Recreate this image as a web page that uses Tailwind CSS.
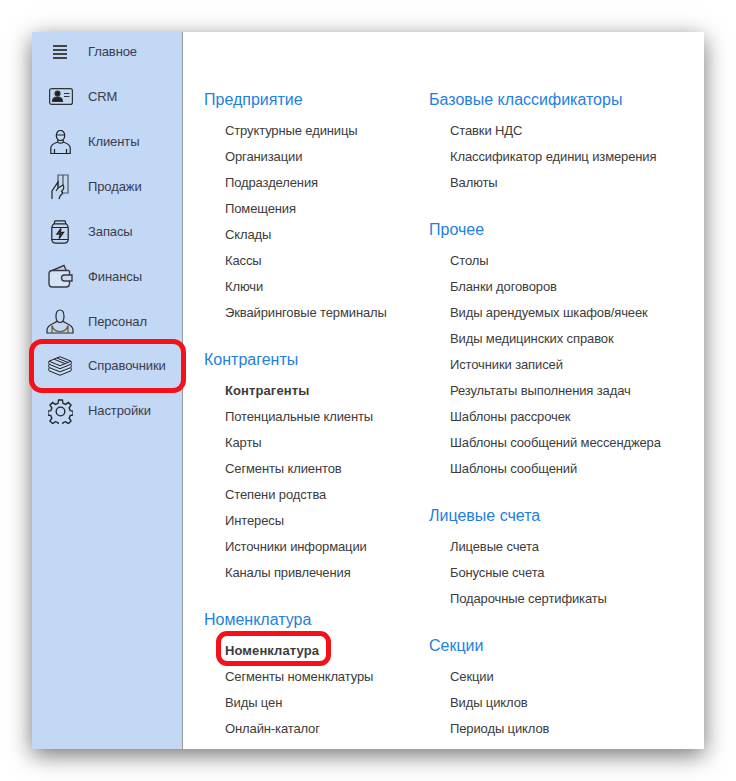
<!DOCTYPE html>
<html lang="en">
<head>
    <meta charset="UTF-8">
    <title>Справочники</title>
    <script src="https://cdn.jsdelivr.net/npm/@tailwindcss/browser@4"></script>
</head>
<body class="bg-white overflow-hidden h-screen font-['Liberation_Sans',sans-serif]">
    <div class="relative mt-[32px] ml-[32px] w-[672px] h-[717px] bg-white flex shadow-[0_6px_22px_rgba(0,0,0,0.55)]">
        <!-- sidebar -->
        <nav class="w-[151px] shrink-0 bg-[#c2d8f5] border-r border-[#9a9a9a] text-[13px] text-[#3b3b4f] tracking-[-0.1px]">
            <a class="flex items-center h-[44.875px] mt-[-2.4px]"><span class="w-[56px] flex justify-center"><svg width="16" height="14" viewBox="0 0 16 14" fill="#444"><rect x="1" y="0" width="14" height="2"/><rect x="1" y="4" width="14" height="2"/><rect x="1" y="8" width="14" height="2"/><rect x="1" y="12" width="14" height="2"/></svg></span>Главное</a>
            <a class="flex items-center h-[44.875px]"><span class="w-[56px] flex justify-center"><svg class="ml-[1px]" width="24" height="17" viewBox="0 0 24 17" fill="none" stroke="#333" stroke-width="1.2"><rect x=".6" y=".6" width="22.800" height="15.800" rx="2"/><circle cx="8.500" cy="5.500" r="2.500" fill="#222"/><path d="M3.500 13.500c0-3 2-4.500 5-4.500s5 1.500 5 4.500z" fill="#222"/><path d="M15 5.500h5.500M15 8.500h5.500"/></svg></span>CRM</a>
            <a class="flex items-center h-[44.875px]"><span class="w-[56px] flex justify-center"><svg width="21" height="24" viewBox="0 0 21 24" fill="none" stroke="#222" stroke-width="1.2"><ellipse cx="10.500" cy="5.500" rx="4.200" ry="5"/><path d="M6.300 5h8.400M7.800 10v2c0 1.500 5.400 1.500 5.400 0v-2M7.800 12c-3 1-7 2-7 6v5.500h19.400V18c0-4-4-5-7-6M4.500 23.500V19M16.500 23.500V19"/></svg></span>Клиенты</a>
            <a class="flex items-center h-[44.875px]"><span class="w-[56px] flex justify-center"><svg width="20" height="26" viewBox="0 0 20 26" fill="none" stroke="#222" stroke-width="1.2"><path d="M8 12V1h10v18h-4M13 1v10" stroke="#555"/><path d="M2 25v-8l6-9v6l5-3c1.500 2 1 4-1.500 6.500l1.500 1.500-2 2-1 1-1 3"/><path d="M8 14l-2 3"/></svg></span>Продажи</a>
            <a class="flex items-center h-[44.875px]"><span class="w-[56px] flex justify-center"><svg width="18" height="24" viewBox="0 0 18 24" fill="none" stroke="#222" stroke-width="1.2"><path d="M4 .8h10l1 3H3zM3 3.800C1 5 .8 6 .8 8v11c0 3 2 4.200 4 4.200h8.400c2 0 4-1.200 4-4.200V8c0-2-.2-3-2.200-4.200"/><path d="M.8 7.500h16.400M.8 19.500h16.400"/><path d="M10 8.500l-4 5.500h3.500L8 18.500l4.500-6H9z" stroke-width="1.300"/></svg></span>Запасы</a>
            <a class="flex items-center h-[44.875px]"><span class="w-[56px] flex justify-center"><svg class="ml-[1px]" width="25" height="24" viewBox="0 0 25 24" fill="none" stroke="#3a3a44" stroke-width="1.4"><path d="M3 7l13-5.500L18 6"/><path d="M21 6.500H4.500C2.500 6.500 1 8 1 10v9.500c0 2 1.500 3.500 3.500 3.500H18c2 0 3.500-1.500 3.500-3.500V17" fill="#d6e4f8"/><path d="M21.500 6.500V11M24 11h-7.500c-2 0-3 1.200-3 3s1 3 3 3H24z" fill="#c9dcf6"/></svg></span>Финансы</a>
            <a class="flex items-center h-[44.875px]"><span class="w-[56px] flex justify-center"><svg width="28" height="25" viewBox="0 0 28 25" fill="none" stroke="#2a2a2a" stroke-width="1.2"><path d="M10 7.500C10 3.500 11 1 14 1s4 2.500 4 6.500-2 6-4 6-4-2-4-6z"/><path d="M11 12c-1 2.500-9 2.500-10 8.500v3.500h26v-3.500c-1-6-9-6-10-8.500"/><path d="M6 24v-7.500c1 3.500 4 6 8 6s7-2.500 8-6V24" stroke="#6b5a2a"/></svg></span>Персонал</a>
            <a class="flex items-center h-[44.875px]"><span class="w-[56px] flex justify-center"><svg width="24" height="20" viewBox="0 0 24 20" fill="none" stroke="#222" stroke-width="1"><path d="M12 .7l11 4.500-11 4.500L1 5.200z"/><path d="M6 3.200l11 4.500M9 2l11 4.500"/><path d="M1 5.200c-.5 1-.5 2 0 3l11 4.500 11-4.500c.5-1 .5-2 0-3M1 8.500c-.5 1-.5 2 0 3l11 4.300 11-4.300c.5-1 .5-2 0-3M1 11.800c-.5 1-.5 2 0 3l11 4.500 11-4.500c.5-1 .5-2 0-3"/></svg></span>Справочники</a>
            <a class="flex items-center h-[44.875px]"><span class="w-[56px] flex justify-center"><svg width="25" height="25" viewBox="0 0 26 26" fill="none" stroke="#222" stroke-width="1.4"><circle cx="13" cy="13" r="4.500"/><path d="M11 1h4l.6 3.500 2.700 1.100 2.900-2 2.800 2.800-2 2.900 1.100 2.700 3 .6v4l-3 .6-1.100 2.700 2 2.900-2.800 2.800-2.900-2-2.700 1.100-.6 3h-4l-.6-3-2.700-1.100-2.900 2-2.800-2.800 2-2.900-1.100-2.700-3-.6v-4l3-.6 1.100-2.700-2-2.900 2.800-2.800 2.900 2 2.700-1.100z"/></svg></span>Настройки</a>
        </nav>
        <!-- main -->
        <main class="flex-1 overflow-hidden flex pl-[21px] pt-[55px] text-[13px] text-[#3c3c3c] tracking-[-0.12px]">
            <div class="w-[225px] shrink-0">
                <h2 class="text-[#1e80e0] text-[16px] h-[26px] leading-[26px] tracking-normal">Предприятие</h2>
                <ul class="pl-[21px] mt-[5px] [&>li]:h-[26px] [&>li]:leading-[26px]">
                    <li>Структурные единицы</li><li>Организации</li><li>Подразделения</li><li>Помещения</li><li>Склады</li><li>Кассы</li><li>Ключи</li><li>Эквайринговые терминалы</li>
                </ul>
                <h2 class="text-[#1e80e0] text-[16px] h-[26px] leading-[26px] tracking-normal mt-[21px]">Контрагенты</h2>
                <ul class="pl-[21px] mt-[5px] [&>li]:h-[26px] [&>li]:leading-[26px]">
                    <li class="font-bold tracking-[0.1px]">Контрагенты</li><li>Потенциальные клиенты</li><li>Карты</li><li>Сегменты клиентов</li><li>Степени родства</li><li>Интересы</li><li>Источники информации</li><li>Каналы привлечения</li>
                </ul>
                <h2 class="text-[#1e80e0] text-[16px] h-[26px] leading-[26px] tracking-normal mt-[21px]">Номенклатура</h2>
                <ul class="pl-[21px] mt-[5px] [&>li]:h-[26px] [&>li]:leading-[26px]">
                    <li class="font-bold tracking-[0.1px]">Номенклатура</li><li>Сегменты номенклатуры</li><li>Виды цен</li><li>Онлайн-каталог</li>
                </ul>
            </div>
            <div class="w-[260px] shrink-0">
                <h2 class="text-[#1e80e0] text-[16px] h-[26px] leading-[26px] tracking-normal">Базовые классификаторы</h2>
                <ul class="pl-[21px] mt-[5px] [&>li]:h-[26px] [&>li]:leading-[26px]">
                    <li>Ставки НДС</li><li>Классификатор единиц измерения</li><li>Валюты</li>
                </ul>
                <h2 class="text-[#1e80e0] text-[16px] h-[26px] leading-[26px] tracking-normal mt-[21px]">Прочее</h2>
                <ul class="pl-[21px] mt-[5px] [&>li]:h-[26px] [&>li]:leading-[26px]">
                    <li>Столы</li><li>Бланки договоров</li><li>Виды арендуемых шкафов/ячеек</li><li>Виды медицинских справок</li><li>Источники записей</li><li>Результаты выполнения задач</li><li>Шаблоны рассрочек</li><li>Шаблоны сообщений мессенджера</li><li>Шаблоны сообщений</li>
                </ul>
                <h2 class="text-[#1e80e0] text-[16px] h-[26px] leading-[26px] tracking-normal mt-[21px]">Лицевые счета</h2>
                <ul class="pl-[21px] mt-[5px] [&>li]:h-[26px] [&>li]:leading-[26px]">
                    <li>Лицевые счета</li><li>Бонусные счета</li><li>Подарочные сертификаты</li>
                </ul>
                <h2 class="text-[#1e80e0] text-[16px] h-[26px] leading-[26px] tracking-normal mt-[21px]">Секции</h2>
                <ul class="pl-[21px] mt-[5px] [&>li]:h-[26px] [&>li]:leading-[26px]">
                    <li>Секции</li><li>Виды циклов</li><li>Периоды циклов</li>
                </ul>
            </div>
        </main>
        <!-- red annotation frames -->
        <div class="absolute left-[-3px] top-[307px] w-[157px] h-[54px] border-[5px] border-[#f5101a] rounded-[13px]"></div>
        <div class="absolute left-[184px] top-[599px] w-[115px] h-[35px] border-[5px] border-[#f5101a] rounded-[11px]"></div>
    </div>
</body>
</html>
